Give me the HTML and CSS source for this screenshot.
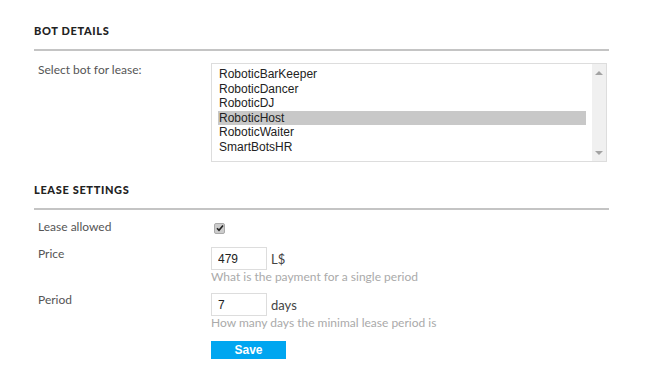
FILE: index.html
```html
<!DOCTYPE html>
<html lang="en">
<head>
    <meta charset="UTF-8">
    <title>Bot lease</title>
    <link rel="stylesheet" href="styles.css">
</head>
<body>
    <div class="page">
        <h2 class="section-title">BOT DETAILS</h2>
        <div class="row">
            <label class="label">Select bot for lease:</label>
            <div class="field">
                <div class="listbox">
                    <ul class="options">
                        <li>RoboticBarKeeper</li>
                        <li>RoboticDancer</li>
                        <li>RoboticDJ</li>
                        <li class="selected">RoboticHost</li>
                        <li>RoboticWaiter</li>
                        <li>SmartBotsHR</li>
                    </ul>
                    <div class="scrollbar">
                        <span class="arrow up"></span>
                        <span class="arrow down"></span>
                    </div>
                </div>
            </div>
        </div>

        <h2 class="section-title second">LEASE SETTINGS</h2>
        <div class="row compact">
            <label class="label">Lease allowed</label>
            <div class="field">
                <span class="checkbox">
                    <svg width="8" height="8" viewBox="0 0 8 8"><path d="M1 4.2 L3 6.3 L7 1.5" fill="none" stroke="#222" stroke-width="1.6"/></svg>
                </span>
            </div>
        </div>
        <div class="row">
            <label class="label">Price</label>
            <div class="field">
                <div class="inline">
                    <input class="small-input" type="text" value="479">
                    <span class="unit">L$</span>
                </div>
                <p class="hint">What is the payment for a single period</p>
            </div>
        </div>
        <div class="row after-hint">
            <label class="label">Period</label>
            <div class="field">
                <div class="inline">
                    <input class="small-input" type="text" value="7">
                    <span class="unit">days</span>
                </div>
                <p class="hint">How many days the minimal lease period is</p>
            </div>
        </div>
        <div class="row actions">
            <span class="label"></span>
            <div class="field">
                <button class="save">Save</button>
            </div>
        </div>
    </div>
</body>
</html>
```

FILE: styles.css
```css
body {
    margin: 0;
    background: #fff;
    font-family: Lato, "Open Sans", sans-serif;
    font-size: 12px;
    color: #555;
}

.page {
    width: 575px;
    margin-left: 34px;
    padding-top: 24px;
}

.section-title {
    margin: 0;
    padding-bottom: 12px;
    border-bottom: 2px solid #c4c4c4;
    font-size: 11px;
    font-weight: 900;
    letter-spacing: 0.65px;
    color: #222;
}

.section-title.second {
    margin-top: 21px;
}

.row {
    display: flex;
    margin-top: 12px;
}

.row.compact {
    margin-top: 10px;
}

.row.after-hint {
    margin-top: 9px;
}

.row.actions {
    margin-top: 11px;
}

.label {
    width: 173px;
    padding-left: 4px;
    flex-shrink: 0;
    line-height: 14px;
}

.field {
    flex: 1;
}

/* liste des bots */
.listbox {
    display: flex;
    width: 394px;
    height: 97px;
    border: 1px solid #ddd;
    font-family: Arial, "Liberation Sans", sans-serif;
    color: #222;
}

.options {
    list-style: none;
    margin: 0;
    padding: 3px 6px 0 6px;
    flex: 1;
}

.options li {
    height: 14.6px;
    line-height: 15px;
    padding-left: 1px;
}

.options li.selected {
    background: #c8c8c8;
}

.scrollbar {
    width: 14px;
    background: #f0f0f0;
    position: relative;
}

.arrow {
    position: absolute;
    left: 3px;
    width: 0;
    height: 0;
    border-left: 4px solid transparent;
    border-right: 4px solid transparent;
}

.arrow.up {
    top: 7px;
    border-bottom: 4px solid #a3a3a3;
}

.arrow.down {
    bottom: 6px;
    border-top: 4px solid #a3a3a3;
}

.checkbox {
    display: inline-flex;
    align-items: center;
    justify-content: center;
    width: 9px;
    height: 9px;
    margin: 2px 0 0 3px;
    border-radius: 2px;
    background: #ccc;
    border: 1px solid #aaa;
}

.inline {
    display: flex;
    align-items: center;
}

.small-input {
    width: 48px;
    height: 21px;
    margin: 0;
    padding: 0 0 0 6px;
    border: 1px solid #ddd;
    font-family: Arial, "Liberation Sans", sans-serif;
    font-size: 12px;
    color: #222;
}

.unit {
    margin-left: 4px;
    font-size: 13px;
    color: #444;
}

.hint {
    margin: 0;
    line-height: 14px;
    font-size: 12px;
    color: #aaa;
}

.save {
    width: 75px;
    height: 18px;
    margin-top: 0;
    background: #00a6f0;
    color: #fff;
    border: none;
    font-family: Arial, "Liberation Sans", sans-serif;
    font-size: 12px;
    font-weight: bold;
    cursor: pointer;
}
```
